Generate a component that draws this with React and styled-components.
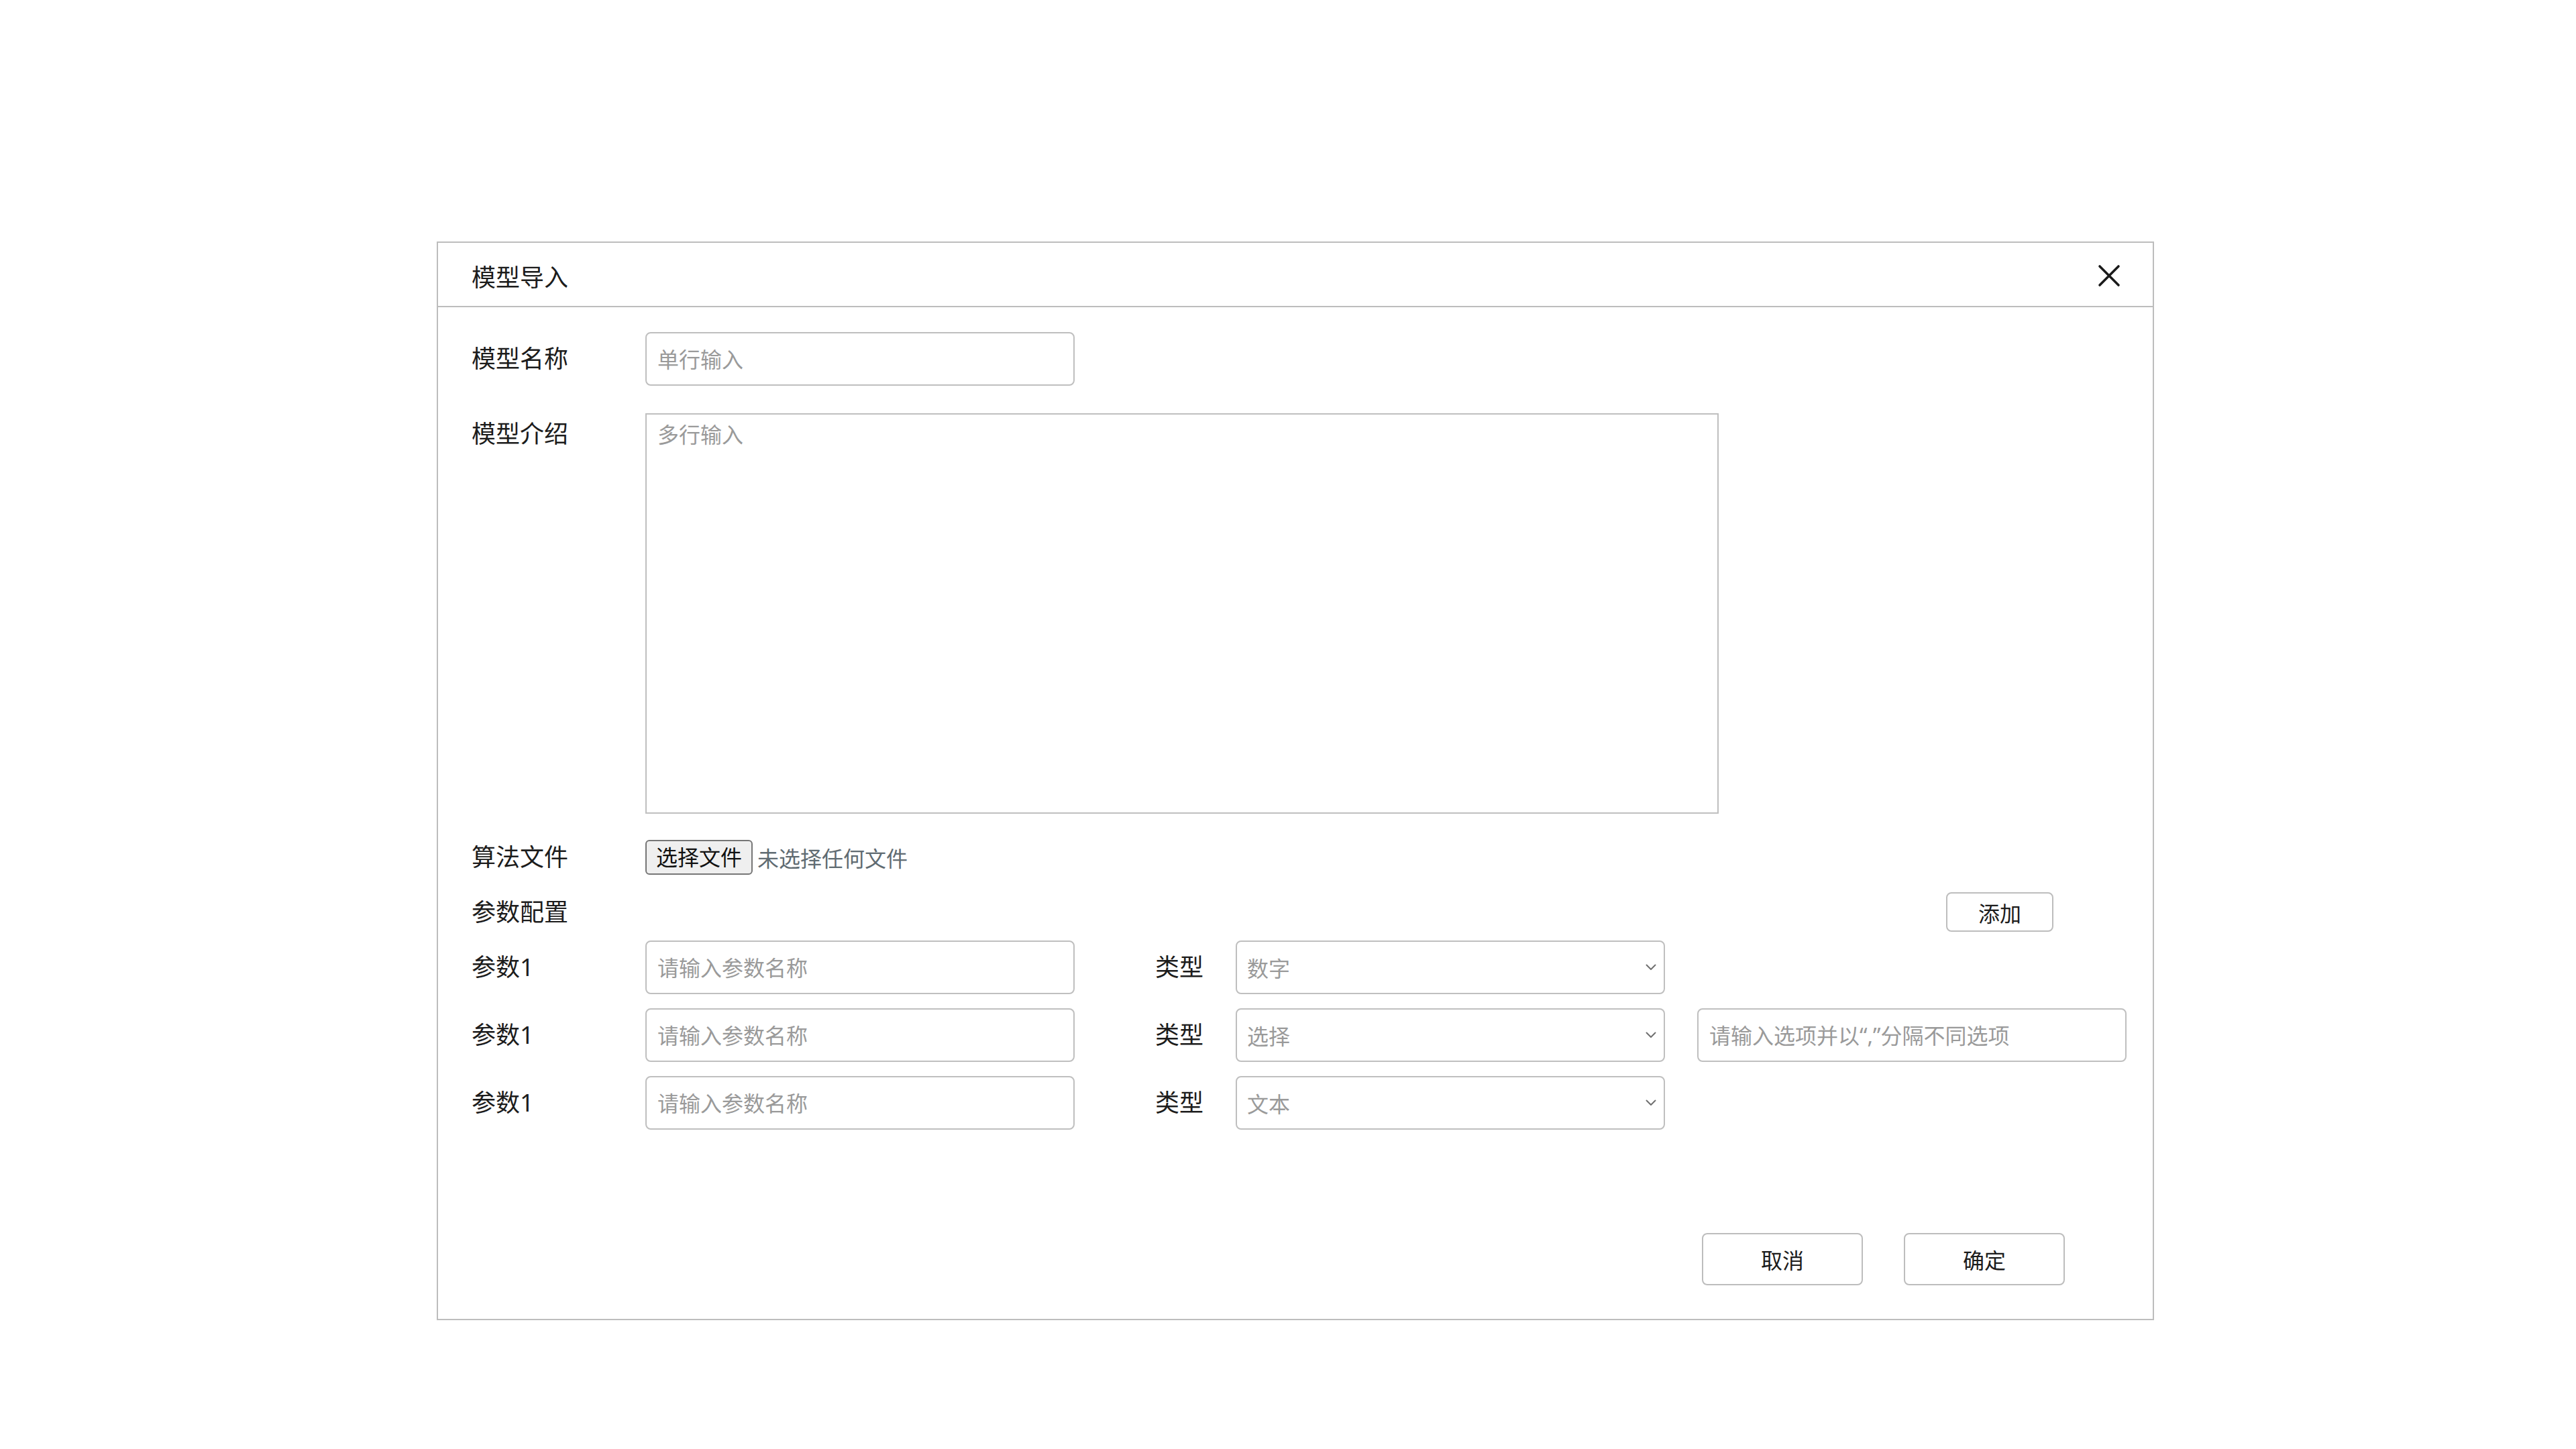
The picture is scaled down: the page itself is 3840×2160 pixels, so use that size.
import React from 'react'
import styled, { createGlobalStyle } from 'styled-components'

const GlobalStyle = createGlobalStyle`
  body {
    margin: 0;
    background: #fff;
    font-family: "Noto Sans", "Noto Sans CJK SC", sans-serif;
    color: #1c1c1c;
  }
`

const Page = styled.div`
  padding: 360px 0 0 651px;
`

const Dialog = styled.div`
  box-sizing: border-box;
  width: 2560px;
  height: 1608px;
  border: 2px solid #bdbdbd;
  background: #fff;
  display: flex;
  flex-direction: column;
`

const Header = styled.div`
  box-sizing: border-box;
  height: 96px;
  border-bottom: 2px solid #bdbdbd;
  display: flex;
  align-items: center;
  justify-content: space-between;
  padding: 4px 48px 0 50px;
`

const Title = styled.span`
  font-size: 36px;
`

const CloseButton = styled.button`
  border: none;
  background: none;
  padding: 0;
  width: 34px;
  height: 34px;
  display: flex;
  cursor: pointer;
`

const Body = styled.div`
  padding: 37px 0 0 50px;
  display: flex;
  flex-direction: column;
`

const Row = styled.div`
  display: flex;
  align-items: ${p => (p.$top ? 'flex-start' : 'center')};
  margin-top: ${p => p.$gap || 0}px;
  width: ${p => (p.$width ? p.$width + 'px' : 'auto')};
  justify-content: ${p => (p.$spread ? 'space-between' : 'flex-start')};
`

const Label = styled.span`
  flex: none;
  width: ${p => p.$w || 259}px;
  margin-left: ${p => p.$ml || 0}px;
  font-size: 36px;
  line-height: 50px;
  padding-top: ${p => p.$pt || 0}px;
`

const TextInput = styled.input`
  box-sizing: border-box;
  width: 640px;
  height: 80px;
  margin-left: ${p => p.$ml || 0}px;
  border: 2px solid #bfbfbf;
  border-radius: 8px;
  padding: 0 16px;
  font-family: inherit;
  font-size: 32px;
  color: #333;
  outline: none;
  &::placeholder {
    color: #9a9a9a;
  }
`

const TextArea = styled.textarea`
  box-sizing: border-box;
  width: 1600px;
  height: 597px;
  border: 2px solid #bfbfbf;
  border-radius: 0;
  padding: 7px 16px;
  font-family: inherit;
  font-size: 32px;
  line-height: 46px;
  resize: none;
  outline: none;
  &::placeholder {
    color: #9a9a9a;
  }
`

const FileButton = styled.button`
  box-sizing: border-box;
  width: 160px;
  height: 52px;
  background: #efefef;
  border: 2px solid #767676;
  border-radius: 6px;
  font-family: inherit;
  font-size: 32px;
  color: #111;
  padding: 0;
  line-height: 1;
`

const FileHint = styled.span`
  margin-left: 7px;
  font-size: 32px;
  color: #606b72;
`

const Button = styled.button`
  box-sizing: border-box;
  width: ${p => p.$w || 240}px;
  height: ${p => p.$h || 78}px;
  background: #fff;
  border: 2px solid #bdbdbd;
  border-radius: 8px;
  font-family: inherit;
  font-size: 32px;
  color: #1c1c1c;
  padding: 0;
  cursor: pointer;
`

const ParamList = styled.div`
  margin-top: 13px;
  display: flex;
  flex-direction: column;
  gap: 21px;
`

const SelectBox = styled.div`
  box-sizing: border-box;
  width: 640px;
  height: 80px;
  border: 2px solid #bfbfbf;
  border-radius: 8px;
  padding: 0 11px 0 15px;
  display: flex;
  align-items: center;
  justify-content: space-between;
  font-size: 32px;
  color: #9a9a9a;
`

const Footer = styled.div`
  margin-top: auto;
  display: flex;
  justify-content: flex-end;
  gap: 61px;
  padding: 0 131px 50px 0;
`

const Chevron = () => (
  <svg width="16" height="10" viewBox="0 0 16 10">
    <path d="M1.5 1.5 8 8 14.5 1.5" fill="none" stroke="#707070" strokeWidth="2" strokeLinecap="round" strokeLinejoin="round" />
  </svg>
)

const CloseIcon = () => (
  <svg width="34" height="34" viewBox="0 0 34 34">
    <path d="M3 3 31 31M31 3 3 31" stroke="#1a1a1a" strokeWidth="3.6" strokeLinecap="round" />
  </svg>
)

const params = [
  { type: '数字' },
  { type: '选择', options: true },
  { type: '文本' },
]

const App = () => {
  return (
    <Page>
      <GlobalStyle />
      <Dialog>
        <Header>
          <Title>模型导入</Title>
          <CloseButton>
            <CloseIcon />
          </CloseButton>
        </Header>
        <Body>
          <Row>
            <Label>模型名称</Label>
            <TextInput placeholder="单行输入" />
          </Row>
          <Row $top $gap={41}>
            <Label $pt={6}>模型介绍</Label>
            <TextArea placeholder="多行输入" />
          </Row>
          <Row $gap={39}>
            <Label>算法文件</Label>
            <FileButton>选择文件</FileButton>
            <FileHint>未选择任何文件</FileHint>
          </Row>
          <Row $gap={26} $width={2358} $spread>
            <Label>参数配置</Label>
            <Button $w={160} $h={59}>添加</Button>
          </Row>
          <ParamList>
            {params.map((p, i) => (
              <Row key={i}>
                <Label>参数1</Label>
                <TextInput placeholder="请输入参数名称" />
                <Label $w={120} $ml={120}>类型</Label>
                <SelectBox>
                  <span>{p.type}</span>
                  <Chevron />
                </SelectBox>
                {p.options && <TextInput $ml={48} placeholder="请输入选项并以“,”分隔不同选项" />}
              </Row>
            ))}
          </ParamList>
        </Body>
        <Footer>
          <Button>取消</Button>
          <Button>确定</Button>
        </Footer>
      </Dialog>
    </Page>
  )
}

export default App
